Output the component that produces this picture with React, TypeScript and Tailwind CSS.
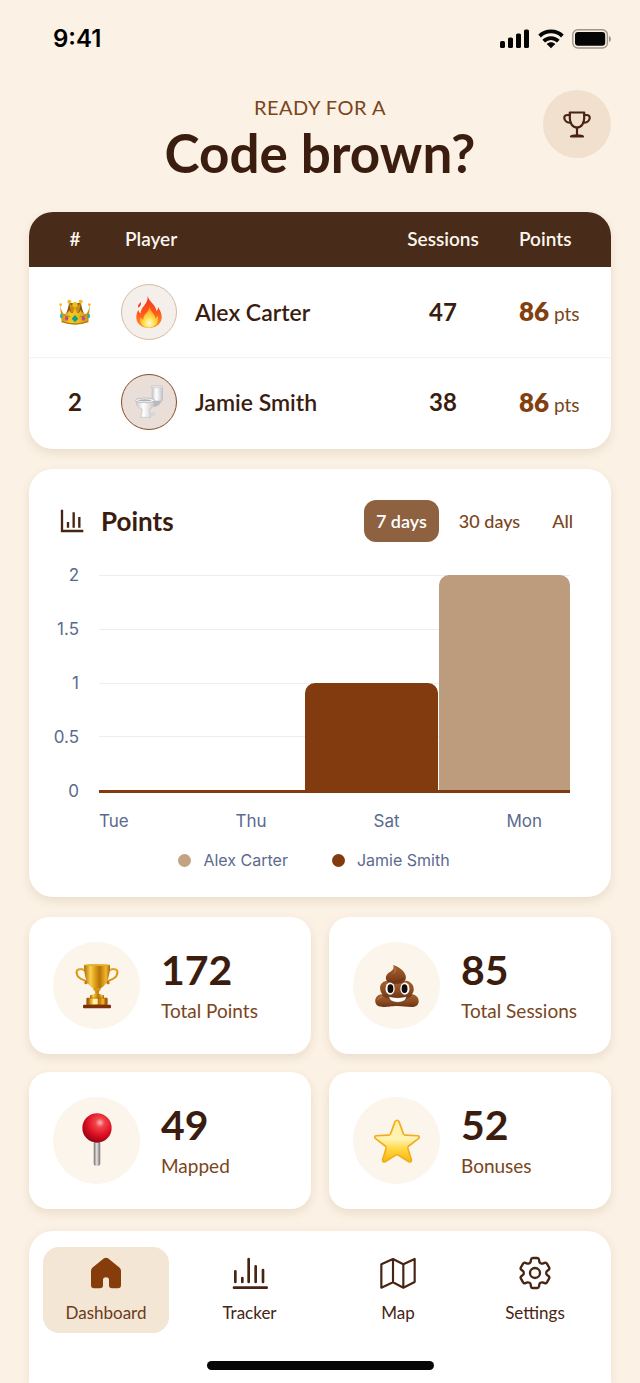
import { useState } from 'react'
import type { ReactNode } from 'react'
import { HiOutlineCog6Tooth } from 'react-icons/hi2'

interface Player {
  name: string
  sessions: number
  points: number
  rank: ReactNode
  avatar: ReactNode
  avatarClass: string
}

interface Stat {
  label: string
  value: number
  icon: ReactNode
}

const ranges = ['7 days', '30 days', 'All']
const yTicks = ['2', '1.5', '1', '0.5', '0']
const xTicks = ['Tue', 'Thu', 'Sat', 'Mon']

const legend = [
  { name: 'Alex Carter', dot: 'bg-[#c4a383]' },
  { name: 'Jamie Smith', dot: 'bg-[#823b0e]' },
]

// Status bar icons
function SignalIcon() {
  return (
    <svg width="30" height="20" viewBox="0 0 30 20" fill="#050505" aria-hidden="true">
      <rect x="0" y="12" width="5" height="7" rx="1.6" />
      <rect x="8" y="8.5" width="5" height="10.5" rx="1.6" />
      <rect x="16" y="4.5" width="5" height="14.5" rx="1.6" />
      <rect x="24" y="0.5" width="5" height="18.5" rx="1.6" />
    </svg>
  )
}

function WifiIcon() {
  return (
    <svg width="26" height="20" viewBox="0 0 26 20" fill="none" stroke="#050505" strokeWidth="3.8" aria-hidden="true">
      <path d="M1.6 7C8 .9 18 .9 24.4 7" />
      <path d="M5.7 12.200C9.900 8.100 16.100 8.100 20.300 12.200" />
      <path d="M13 19.200 8.700 15c2.500-2.200 6.100-2.200 8.600 0Z" fill="#050505" stroke="none" />
    </svg>
  )
}

function BatteryIcon() {
  return (
    <svg width="39" height="20" viewBox="0 0 39 20" aria-hidden="true">
      <rect x="0.8" y="0.8" width="34.6" height="18.2" rx="5" fill="none" stroke="#9c968d" strokeWidth="1.4" />
      <rect x="3" y="3" width="30.2" height="13.8" rx="3" fill="#050505" />
      <path d="M37 7c2.600.6 2.600 5.400 0 6Z" fill="#9c968d" />
    </svg>
  )
}

// Line icons
function TrophyLineIcon() {
  return (
    <svg width="28" height="27" viewBox="0 0 28 27" fill="none" stroke="#472413" strokeWidth="2.2" strokeLinecap="round" strokeLinejoin="round" aria-hidden="true">
      <path d="M6.800 1.500h14.400v5.500c0 5-2.600 9.500-7.200 9.500S6.800 12 6.800 7Z" />
      <path d="M6.800 4H4.500C2.400 4 1.200 5.200 1.300 7c.1 2.600 2.700 4.700 6.300 4.700M21.200 4h2.300c2.100 0 3.300 1.200 3.200 3-.1 2.600-2.700 4.700-6.300 4.700" />
      <path d="M14 16.500v7.200" />
      <path d="M8 25.500c1-1.700 11-1.700 12 0Z" />
    </svg>
  )
}

function ChartIcon() {
  return (
    <svg width="24" height="24" viewBox="0 0 72 72" fill="none" stroke="#472413" strokeWidth="7" aria-hidden="true">
      <path d="M6 2v64h64M24 39v17M41 10v46M58 24v32" />
    </svg>
  )
}

function HomeIcon() {
  return (
    <svg width="32" height="32" viewBox="0 0 96 96" fill="#873d0b" aria-hidden="true">
      <path d="M42 4q6-4 12 0l35 28q4 4 4 9v44q0 9-9 9H66q-9 0-9-9V69q0-8-9-8t-9 8v16q0 9-9 9H12q-9 0-9-9V41q0-5 4-9Z" />
    </svg>
  )
}

function TrackerIcon() {
  return (
    <svg width="36" height="32" viewBox="0 0 108 96" fill="none" stroke="#472413" strokeWidth="8" strokeLinecap="round" aria-hidden="true">
      <path d="M10 43v32M31 63v12M50 6v69M71 28v47M93 39v36M6 92h98" />
    </svg>
  )
}

function MapIcon() {
  return (
    <svg width="36" height="32" viewBox="0 0 108 96" fill="none" stroke="#472413" strokeWidth="6.5" strokeLinejoin="round" aria-hidden="true">
      <path d="m4 22 35-16 31 16 34-16v69L70 92 39 76 4 92ZM39 6v70M70 22v70" />
    </svg>
  )
}

// Emoji style pictures
function Crown() {
  return (
    <svg width="32" height="26" viewBox="0 0 96 78" className="mx-auto" role="img" aria-label="1">
      <defs>
        <linearGradient id="crown" x1="0" x2="1">
          <stop offset="0" stopColor="#d08e0b" />
          <stop offset="0.35" stopColor="#f2c928" />
          <stop offset="0.6" stopColor="#f0bd1c" />
          <stop offset="1" stopColor="#c98a10" />
        </linearGradient>
      </defs>
      <path d="M16 52C24 42 28 26 30 12h36c2 14 6 30 14 40Z" fill="#8a5612" />
      <path d="M30 12q18 18 36 0l-6 28H36Z" fill="#c98d14" />
      <path d="M3 18 8 68q40 15 80 0l5-50q-5 22-12 27-12-2-16-12-5 12-10 8Q50 36 48 20 46 36 41 41q-5 4-10-8-4 10-16 12Q8 40 3 18Z" fill="url(#crown)" />
      <path d="M8 65q40 15 80 0v5q-40 14-80 0Z" fill="#b37c0e" />
      <path d="M14 46q8 8 20 7M62 53q12 1 20-7" fill="none" stroke="#a8740f" strokeWidth="2" />
      <g fill="#efbd22">
        <circle cx="5" cy="17" r="4" />
        <circle cx="31" cy="8" r="6" />
        <circle cx="48" cy="17" r="8" />
        <circle cx="65" cy="8" r="6" />
        <circle cx="91" cy="17" r="4" />
      </g>
      <path d="m48 48 10 11-10 11-10-11Z" fill="#13a07f" />
      <ellipse cx="7" cy="51" rx="4" ry="7" fill="#22b79d" />
      <ellipse cx="89" cy="51" rx="4" ry="7" fill="#22b79d" />
      <ellipse cx="23" cy="58" rx="5" ry="7" fill="#c9458f" />
      <ellipse cx="73" cy="58" rx="5" ry="7" fill="#b9489f" />
    </svg>
  )
}

function Fire() {
  return (
    <svg width="28" height="34" viewBox="0 0 84 102" aria-hidden="true">
      <defs>
        <linearGradient id="flame" x1="0" y1="0" x2="0" y2="1">
          <stop offset="0" stopColor="#f0341a" />
          <stop offset="0.55" stopColor="#ff5a1c" />
          <stop offset="1" stopColor="#ff9a1f" />
        </linearGradient>
        <radialGradient id="flameCore" cx="0.5" cy="0.8" r="0.65">
          <stop offset="0" stopColor="#fffde0" />
          <stop offset="0.45" stopColor="#ffe04a" />
          <stop offset="1" stopColor="#ffa126" />
        </radialGradient>
      </defs>
      <path d="M38 3c4 18 24 25 27 46 3-4 4-8 4-13 8 12 12 22 11 34-2 18-18 29-38 29S5 88 4 69c-1-10 3-18 6-25 1 6 3 9 7 11C16 34 40 30 38 3Z" fill="url(#flame)" />
      <path d="M45 34c-2 14 15 22 17 37 3-3 4-6 5-10 8 20-4 37-25 37-19 0-31-14-25-31 2 4 4 6 8 7-1-16 17-22 20-40Z" fill="url(#flameCore)" />
      <path d="M17 21c3 7 0 12-7 17-3-7 2-10 7-17Z" fill="#f4431f" />
    </svg>
  )
}

function Toilet() {
  return (
    <svg width="28" height="34" viewBox="0 0 84 102" aria-hidden="true">
      <defs>
        <linearGradient id="ceramic" x1="0" x2="1">
          <stop offset="0" stopColor="#c9cacd" />
          <stop offset="0.4" stopColor="#ffffff" />
          <stop offset="1" stopColor="#c2c3c7" />
        </linearGradient>
      </defs>
      <path d="M56 44h24q-2 18-24 22Z" fill="#b9babd" />
      <rect x="51" y="2" width="32" height="46" rx="4" fill="url(#ceramic)" stroke="#b4b5b9" strokeWidth="1.5" />
      <rect x="49" y="1" width="35" height="7" rx="3" fill="#e2e3e5" stroke="#b4b5b9" />
      <path d="M3 47q1 20 19 26l-5 24h30l-4-24q14-6 16-26Z" fill="url(#ceramic)" stroke="#b4b5b9" strokeWidth="1.5" />
      <path d="M47 82h14v12H47Z" fill="#d6d7da" />
      <ellipse cx="30" cy="46" rx="29" ry="7" fill="#f4f4f5" stroke="#a9aaae" strokeWidth="2" />
      <ellipse cx="29" cy="46" rx="20" ry="3" fill="#b0b1b5" />
    </svg>
  )
}

function Trophy() {
  return (
    <svg width="44" height="46" viewBox="0 0 132 138" aria-hidden="true">
      <defs>
        <linearGradient id="gold" x1="0" x2="1">
          <stop offset="0" stopColor="#b06c08" />
          <stop offset="0.25" stopColor="#f7cf4e" />
          <stop offset="0.42" stopColor="#e0a017" />
          <stop offset="0.6" stopColor="#b87309" />
          <stop offset="0.85" stopColor="#f0b92c" />
          <stop offset="1" stopColor="#a46007" />
        </linearGradient>
      </defs>
      <path d="M29 22C14 14 3 20 5 31c2 13 14 18 33 25M103 22c15-8 26-2 24 9-2 13-14 18-33 25" fill="none" stroke="#d8920f" strokeWidth="6" strokeLinecap="round" />
      <path d="M28 20C16 14 7 19 7 27M104 20c12-6 21-1 21 7" fill="none" stroke="#f8d667" strokeWidth="2" />
      <circle cx="33" cy="59" r="5" fill="#c07a0b" />
      <circle cx="99" cy="59" r="5" fill="#c07a0b" />
      <path d="M27 6h78c0 38-10 62-30 71l-4 14 10 9H51l10-9-4-14C37 68 27 44 27 6Z" fill="url(#gold)" />
      <ellipse cx="66" cy="6" rx="39" ry="3" fill="#e7ad2c" />
      <ellipse cx="66" cy="79" rx="12" ry="4" fill="#d6960f" />
      <path d="M45 97q21-7 42 0v8H45Z" fill="url(#gold)" />
      <rect x="34" y="104" width="64" height="23" rx="3" fill="#a85a10" />
      <rect x="40" y="106" width="52" height="19" fill="url(#gold)" />
      <rect x="54" y="107" width="14" height="17" fill="#fff0a8" />
      <rect x="24" y="125" width="84" height="11" rx="3" fill="#7b2f0b" />
    </svg>
  )
}

function Poop() {
  return (
    <svg width="46" height="44" viewBox="0 0 140 134" aria-hidden="true">
      <defs>
        <linearGradient id="poop" x1="0" y1="0" x2="0" y2="1">
          <stop offset="0" stopColor="#a5602f" />
          <stop offset="0.6" stopColor="#8a4a20" />
          <stop offset="1" stopColor="#6b3314" />
        </linearGradient>
      </defs>
      <path d="M24 92C9 93 2 105 4 116c2 11 11 15 24 15 16 0 24-3 42-3s28 3 44 3c13 0 21-5 22-16 1-12-7-22-22-23Z" fill="url(#poop)" />
      <path d="M36 52C22 56 17 66 19 77c1 12 9 22 25 26 18 4 36 4 54 0 15-4 23-14 23-26 0-13-8-22-21-26Z" fill="url(#poop)" />
      <path d="M58 3c4 8 1 14-6 19-11 6-17 13-16 22 2 12 14 16 32 16 20 0 30-8 29-21C95 22 76 8 58 3Z" fill="url(#poop)" />
      <path d="M40 50c16 7 38 4 52-8M26 95c8 7 14 9 20 10M116 94c-6 6-12 9-20 11" fill="none" stroke="#6a3516" strokeWidth="2.500" strokeLinecap="round" />
      <path d="M62 12c6 6 4 11-2 16M12 108c2-5 6-7 12-8" fill="none" stroke="#c58556" strokeWidth="3" strokeLinecap="round" />
      <ellipse cx="49" cy="75" rx="14" ry="19" fill="#fff" />
      <ellipse cx="94" cy="75" rx="14" ry="19" fill="#fff" />
      <ellipse cx="50" cy="75" rx="9" ry="13" fill="#120b07" />
      <ellipse cx="93" cy="75" rx="9" ry="13" fill="#120b07" />
      <path d="M44 99q28 7 56 0-4 18-28 18T44 99Z" fill="#fff" stroke="#5c2b10" strokeWidth="2" />
    </svg>
  )
}

function Pin() {
  return (
    <svg width="32" height="56" viewBox="0 0 98 172" aria-hidden="true">
      <defs>
        <linearGradient id="needle" x1="0" x2="1">
          <stop offset="0" stopColor="#6f6b69" />
          <stop offset="0.45" stopColor="#e4e1df" />
          <stop offset="1" stopColor="#77716e" />
        </linearGradient>
        <radialGradient id="ball" cx="0.6" cy="0.32" r="0.7">
          <stop offset="0" stopColor="#ffb9b4" />
          <stop offset="0.22" stopColor="#f2434a" />
          <stop offset="0.65" stopColor="#d90d20" />
          <stop offset="1" stopColor="#8f0414" />
        </radialGradient>
      </defs>
      <rect x="39" y="86" width="20" height="76" rx="6" fill="url(#needle)" />
      <circle cx="49" cy="46" r="45" fill="url(#ball)" />
    </svg>
  )
}

function Star() {
  return (
    <svg width="48" height="46" viewBox="0 0 146 138" aria-hidden="true">
      <defs>
        <linearGradient id="star" x1="0" y1="0" x2="0" y2="1">
          <stop offset="0" stopColor="#fff0a6" />
          <stop offset="0.45" stopColor="#fff3b4" />
          <stop offset="0.7" stopColor="#ffd640" />
          <stop offset="1" stopColor="#fbb40c" />
        </linearGradient>
      </defs>
      <path
        d="M67 10q6-8 12 0l14 38q2 3 6 3l38 2q7 3 1 9l-30 23q-3 3-2 6l11 36q0 8-8 5l-32-20q-4-2-8 0l-32 20q-8 3-8-5l11-36q1-3-2-6L8 62q-6-6 1-9l38-2q4 0 6-3Z"
        fill="url(#star)"
        stroke="#f2ac1d"
        strokeWidth="5"
        strokeLinejoin="round"
      />
    </svg>
  )
}

const players: Player[] = [
  {
    name: 'Alex Carter',
    sessions: 47,
    points: 86,
    rank: <Crown />,
    avatar: <Fire />,
    avatarClass: 'border-[#d3bba8] bg-[#f5efeb]',
  },
  {
    name: 'Jamie Smith',
    sessions: 38,
    points: 86,
    rank: '2',
    avatar: <Toilet />,
    avatarClass: 'border-[#8a4a20] bg-[#e9dfd8]',
  },
]

const stats: Stat[] = [
  { label: 'Total Points', value: 172, icon: <Trophy /> },
  { label: 'Total Sessions', value: 85, icon: <Poop /> },
  { label: 'Mapped', value: 49, icon: <Pin /> },
  { label: 'Bonuses', value: 52, icon: <Star /> },
]

const navItems = [
  { label: 'Dashboard', icon: <HomeIcon /> },
  { label: 'Tracker', icon: <TrackerIcon /> },
  { label: 'Map', icon: <MapIcon /> },
  { label: 'Settings', icon: <HiOutlineCog6Tooth size={40} strokeWidth={1.4} aria-hidden="true" /> },
]

export default function App() {
  const [range, setRange] = useState('7 days')

  return (
    <div className="flex min-h-screen flex-col bg-[#fbf1e4] px-[29px] font-['Lato',sans-serif] text-[#3a1d0f]">
      {/* Status bar */}
      <div className="flex h-[78px] items-center justify-between pl-6">
        <span className="font-['Inter',sans-serif] text-2xl font-semibold text-black">9:41</span>
        <div className="flex items-center gap-2">
          <SignalIcon />
          <WifiIcon />
          <BatteryIcon />
        </div>
      </div>

      {/* Header */}
      <header className="grid grid-cols-[68px_1fr_68px] pt-3">
        <div className="col-start-2 flex flex-col items-center pt-[3px]">
          <p className="text-xl leading-7 tracking-wide text-[#7a4520]">READY FOR A</p>
          <h1 className="text-[53px] leading-[64px] font-bold whitespace-nowrap">Code brown?</h1>
        </div>
        <button
          type="button"
          aria-label="Trophies"
          className="flex size-[68px] items-center justify-center rounded-full bg-[#f1e0cd]"
        >
          <TrophyLineIcon />
        </button>
      </header>

      <main className="flex flex-col gap-5 pt-[27px]">
        {/* Leaderboard */}
        <div className="overflow-hidden rounded-3xl bg-white pb-0.5 shadow-[0_4px_10px_rgba(120,80,40,0.12)]">
          <table className="w-full table-fixed">
            <colgroup>
              <col className="w-[92px]" />
              <col />
              <col className="w-[96px]" />
              <col className="w-[120px]" />
            </colgroup>
            <thead className="bg-[#482b18] text-[19px] text-[#fdf6ee]">
              <tr className="h-[55px]">
                <th className="font-semibold">#</th>
                <th className="pl-1 text-left font-semibold">Player</th>
                <th className="font-semibold">Sessions</th>
                <th className="pl-7 text-left font-semibold">Points</th>
              </tr>
            </thead>
            <tbody className="divide-y divide-[#faf1ea]">
              {players.map((player) => (
                <tr key={player.name} className="h-[90px]">
                  <td className="text-center text-2xl font-bold">{player.rank}</td>
                  <td>
                    <div className="flex items-center gap-[18px]">
                      <span className={`flex size-14 items-center justify-center rounded-full border ${player.avatarClass}`}>
                        {player.avatar}
                      </span>
                      <span className="text-[23px] font-semibold">{player.name}</span>
                    </div>
                  </td>
                  <td className="text-center text-2xl font-bold">{player.sessions}</td>
                  <td className="pl-7 text-[19px] text-[#7a4520]">
                    <span className="text-[26px] font-extrabold text-[#823f10]">{player.points}</span> pts
                  </td>
                </tr>
              ))}
            </tbody>
          </table>
        </div>

        {/* Points chart */}
        <section className="rounded-3xl bg-white pt-[31px] pb-[25px] shadow-[0_4px_10px_rgba(120,80,40,0.12)]">
          <div className="flex items-center justify-between pr-[26px] pl-[31px]">
            <div className="flex items-center gap-[17px]">
              <ChartIcon />
              <h2 className="text-[26px] font-bold">Points</h2>
            </div>
            <div className="flex gap-2">
              {ranges.map((r) => (
                <button
                  key={r}
                  type="button"
                  aria-pressed={r === range}
                  onClick={() => setRange(r)}
                  className={`h-[42px] rounded-xl px-3 text-lg ${
                    r === range ? 'bg-[#8e6140] font-semibold text-white' : 'font-medium text-[#7a4520]'
                  }`}
                >
                  {r}
                </button>
              ))}
            </div>
          </div>

          <div className="grid grid-cols-[50px_1fr] gap-x-5 pt-[21px] pr-[41px] font-['Inter',sans-serif] text-[17px] leading-6 text-[#5a6a8e]">
            <div className="flex h-60 flex-col justify-between text-right">
              {yTicks.map((tick) => (
                <span key={tick}>{tick}</span>
              ))}
            </div>
            {/* grid lines and bars share one cell */}
            <div className="my-3 grid">
              <div className="col-start-1 row-start-1 flex flex-col justify-between">
                {yTicks.map((tick) => (
                  <div key={tick} className="h-px bg-[#ececf3]" />
                ))}
              </div>
              <div className="col-start-1 row-start-1 -mb-0.5 grid grid-cols-[205fr_134fr_131fr] items-end gap-x-px border-b-3 border-[#823b0e]">
                <div className="col-start-2 h-1/2 rounded-t-[10px] bg-[#823b0e]" />
                <div className="h-full rounded-t-[10px] bg-[#bd9c7e]" />
              </div>
            </div>
            <div className="col-start-2 flex justify-between pt-1.5 pr-7">
              {xTicks.map((tick) => (
                <span key={tick}>{tick}</span>
              ))}
            </div>
          </div>

          <ul className="flex justify-center gap-11 pt-[15px] pr-3 font-['Inter',sans-serif] text-base leading-6 text-[#5a6a8e]">
            {legend.map((item) => (
              <li key={item.name} className="flex items-center gap-3">
                <span className={`size-[13px] rounded-full ${item.dot}`} />
                {item.name}
              </li>
            ))}
          </ul>
        </section>

        {/* Stat cards */}
        <div className="grid grid-cols-2 gap-[18px]">
          {stats.map((stat) => (
            <div
              key={stat.label}
              className="flex h-[137px] items-center gap-[21px] rounded-[20px] bg-white pl-6 shadow-[0_4px_10px_rgba(120,80,40,0.12)]"
            >
              <div className="flex size-[87px] shrink-0 items-center justify-center rounded-full bg-[#fbf5eb]">
                {stat.icon}
              </div>
              <div>
                <div className="text-[41px] leading-[50px] font-bold">{stat.value}</div>
                <div className="text-[19px] leading-8 text-[#7a4520]">{stat.label}</div>
              </div>
            </div>
          ))}
        </div>
      </main>

      {/* Bottom navigation */}
      <footer className="mt-[22px] flex flex-1 flex-col justify-between rounded-t-3xl bg-white pt-4 pr-[7px] pb-[13px] pl-[14px] shadow-[0_2px_10px_rgba(120,80,40,0.1)]">
        <nav className="grid grid-cols-[126fr_161fr_136fr_138fr]">
          {navItems.map((item, i) => (
            <a
              key={item.label}
              href="#"
              aria-current={i === 0 ? 'page' : undefined}
              className={`flex h-[86px] flex-col items-center rounded-2xl pt-[6px] text-[17px] leading-6 ${
                i === 0 ? 'bg-[#f4e6d5] text-[#6b3b1b]' : 'text-[#472413]'
              }`}
            >
              <span className="flex h-10 items-center">{item.icon}</span>
              <span className="pt-2">{item.label}</span>
            </a>
          ))}
        </nav>
        <div className="mt-7 mr-[7px] h-[9px] w-[227px] self-center rounded-full bg-[#070707]" />
      </footer>
    </div>
  )
}
